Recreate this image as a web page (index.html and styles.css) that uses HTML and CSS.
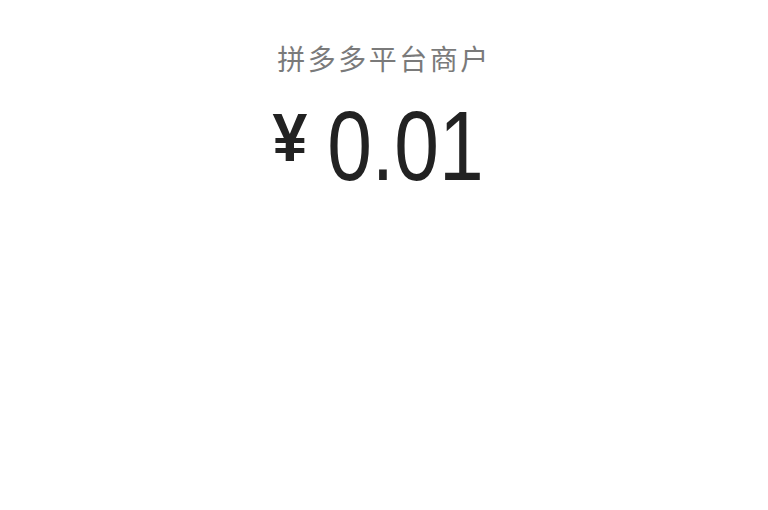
FILE: index.html
```html
<!DOCTYPE html>
<html lang="zh-CN">
<head>
  <meta charset="UTF-8" />
  <meta name="viewport" content="width=device-width, initial-scale=1.0"/>
  <title>支付</title>
  <link rel="stylesheet" href="styles.css">
</head>
<body>
  <div class="pay">
    <div class="merchant">拼多多平台商户</div>
    <div class="amount">
      <span class="currency">¥</span>
      <span class="value">0.01</span>
    </div>
  </div>
</body>
</html>
```

FILE: styles.css
```css
body {
  margin: 0;
  background: #fff;
  font-family: "Noto Sans CJK SC", "Noto Sans", sans-serif;
}

.pay {
  display: flex;
  flex-direction: column;
  align-items: center;
  padding-top: 38px;
}

.merchant {
  font-size: 28px;
  line-height: 40px;
  color: #7a7a7a;
  letter-spacing: 2.5px;
}

.amount {
  display: flex;
  align-items: flex-start;
  margin-top: 19px;
  padding-right: 12px;
  color: #222;
  font-family: "Liberation Sans", Arial, sans-serif;
}

/* the digits in the app are narrower than Arial */
.currency {
  display: inline-block;
  font-size: 68px;
  line-height: 1;
  font-weight: bold;
  margin: 6px 18px 0 -2px;
  transform: scaleX(0.92);
}

.value {
  display: inline-block;
  font-size: 98px;
  line-height: 1;
  margin: 0 -17px;
  transform: scaleX(0.82);
}
```
